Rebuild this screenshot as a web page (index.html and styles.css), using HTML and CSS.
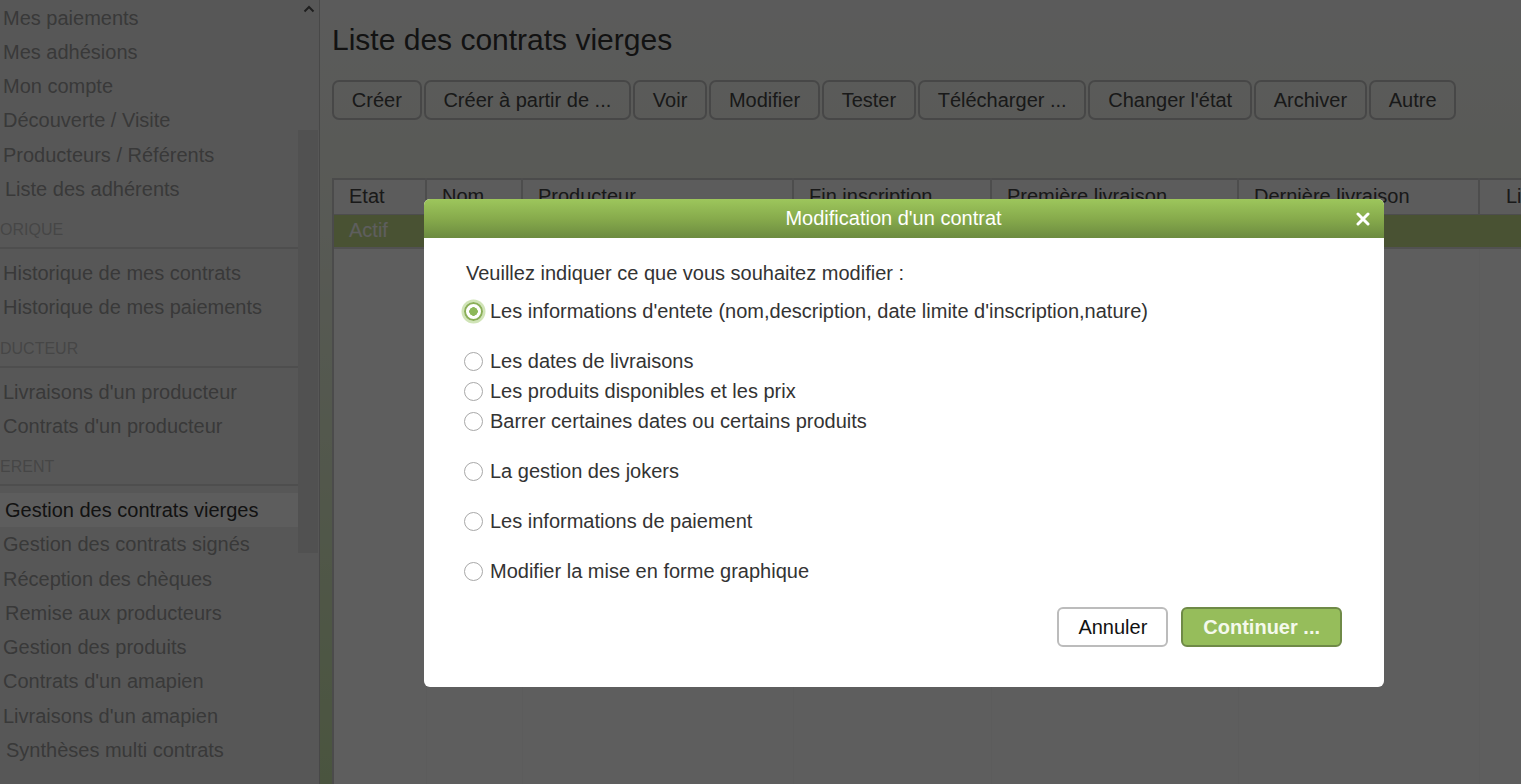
FILE: index.html
```html
<!DOCTYPE html>
<html lang="fr">
<head>
<meta charset="utf-8">
<title>Liste des contrats vierges</title>
<link rel="stylesheet" href="styles.css">
</head>
<body>
<div class="page">
  <aside class="sidebar">
    <div class="side-content">
      <ul class="menu first">
        <li>Mes paiements</li>
        <li>Mes adhésions</li>
        <li>Mon compte</li>
        <li>Découverte / Visite</li>
        <li>Producteurs / Référents</li>
        <li class="shift">Liste des adhérents</li>
      </ul>
      <div class="sect">ORIQUE</div>
      <ul class="menu">
        <li>Historique de mes contrats</li>
        <li>Historique de mes paiements</li>
      </ul>
      <div class="sect">DUCTEUR</div>
      <ul class="menu">
        <li>Livraisons d'un producteur</li>
        <li>Contrats d'un producteur</li>
      </ul>
      <div class="sect">ERENT</div>
      <ul class="menu">
        <li class="active shift">Gestion des contrats vierges</li>
        <li>Gestion des contrats signés</li>
        <li>Réception des chèques</li>
        <li class="shift">Remise aux producteurs</li>
        <li>Gestion des produits</li>
        <li>Contrats d'un amapien</li>
        <li>Livraisons d'un amapien</li>
        <li class="shift2">Synthèses multi contrats</li>
      </ul>
    </div>
    <div class="scrollbar">
      <div class="sb-arrow">
        <svg width="12" height="8" viewBox="0 0 12 8"><path d="M1.5 6.5 L6 2 L10.5 6.5" fill="none" stroke="#555" stroke-width="2"/></svg>
      </div>
      <div class="sb-thumb"></div>
    </div>
  </aside>

  <main class="main">
    <h1 class="title">Liste des contrats vierges</h1>
    <div class="toolbar">
      <button class="tbtn">Créer</button>
      <button class="tbtn">Créer à partir de ...</button>
      <button class="tbtn">Voir</button>
      <button class="tbtn">Modifier</button>
      <button class="tbtn">Tester</button>
      <button class="tbtn">Télécharger ...</button>
      <button class="tbtn">Changer l'état</button>
      <button class="tbtn">Archiver</button>
      <button class="tbtn">Autre</button>
    </div>
    <div class="grid-wrap">
      <table class="grid">
        <colgroup>
          <col class="c1"><col class="c2"><col class="c3"><col class="c4"><col class="c5"><col class="c6"><col class="c7">
        </colgroup>
        <thead>
          <tr>
            <th>Etat</th><th>Nom</th><th>Producteur</th><th>Fin inscription</th><th>Première livraison</th><th>Dernière livraison</th><th class="last">Livraisons</th>
          </tr>
        </thead>
        <tbody>
          <tr class="sel">
            <td>Actif</td><td></td><td></td><td></td><td></td><td></td><td></td>
          </tr>
          <tr class="filler">
            <td></td><td></td><td></td><td></td><td></td><td></td><td></td>
          </tr>
        </tbody>
      </table>
    </div>
  </main>
</div>

<div class="overlay"></div>

<div class="dialog" role="dialog">
  <div class="dlg-head">
    <span></span>
    <span class="dlg-title">Modification d'un contrat</span>
    <span class="dlg-close">
      <svg width="14" height="14" viewBox="0 0 14 14"><path d="M2 2 L12 12 M12 2 L2 12" stroke="#fff" stroke-width="3" stroke-linecap="round"/></svg>
    </span>
  </div>
  <div class="dlg-body">
    <div class="intro">Veuillez indiquer ce que vous souhaitez modifier :</div>
    <div class="opt"><span class="radio checked"></span>Les informations d'entete (nom,description, date limite d'inscription,nature)</div>
    <div class="spacer"></div>
    <div class="opt"><span class="radio"></span>Les dates de livraisons</div>
    <div class="opt"><span class="radio"></span>Les produits disponibles et les prix</div>
    <div class="opt"><span class="radio"></span>Barrer certaines dates ou certains produits</div>
    <div class="spacer"></div>
    <div class="opt"><span class="radio"></span>La gestion des jokers</div>
    <div class="spacer"></div>
    <div class="opt"><span class="radio"></span>Les informations de paiement</div>
    <div class="spacer"></div>
    <div class="opt"><span class="radio"></span>Modifier la mise en forme graphique</div>
    <div class="dlg-actions">
      <button class="btn-cancel">Annuler</button>
      <button class="btn-ok">Continuer ...</button>
    </div>
  </div>
</div>
</body>
</html>
```

FILE: styles.css
```css
* { box-sizing: border-box; }
html, body { margin: 0; padding: 0; height: 100%; }
body {
  font-family: "Liberation Sans", Arial, sans-serif;
  color: #333;
  overflow: hidden;
}
.page {
  display: flex;
  height: 100vh;
}

/* Sidebar */
.sidebar {
  width: 320px;
  flex: 0 0 320px;
  display: flex;
  background: #ededed;
  border-right: 1px solid #c4c4c4;
  overflow: hidden;
}
.side-content {
  width: 298px;
  flex: 0 0 298px;
  padding-top: 0.6px;
}
.menu {
  list-style: none;
  margin: 0;
  padding: 0;
}
.menu li {
  font-size: 20px;
  line-height: 34.25px;
  height: 34.25px;
  padding-left: 3px;
  color: #9a9a9a;
  white-space: nowrap;
}
.menu li.shift { padding-left: 5px; }
.menu li.shift2 { padding-left: 6px; }
.menu li.active {
  background: #fbfbfb;
  color: #333;
}
.sect {
  font-size: 16px;
  line-height: 18px;
  padding: 15px 0 8px 0;
  color: #bdbdbd;
  border-bottom: 2px solid #d4d4d4;
  margin-bottom: 7px;
  white-space: nowrap;
}
.scrollbar {
  width: 21px;
  flex: 0 0 21px;
  display: flex;
  flex-direction: column;
  align-items: center;
}
.sb-arrow {
  height: 17px;
  width: 21px;
  display: flex;
  justify-content: center;
  align-items: center;
}
.sb-thumb {
  margin-top: 113px;
  width: 20px;
  height: 423px;
  align-self: flex-start;
  background: #dcdcdc;
}

/* Main */
.main {
  flex: 1;
  min-width: 0;
  display: flex;
  flex-direction: column;
  padding-left: 12px;
  background: linear-gradient(to bottom, #f7f7f7 0%, #eef3e6 30%, #c9e5ab 100%);
}
.title {
  font-size: 30px;
  font-weight: normal;
  line-height: 34px;
  margin: 23px 0 23px 0;
  color: #333;
  white-space: nowrap;
}
.toolbar {
  display: flex;
  gap: 2px;
  height: 40px;
}
.tbtn {
  font-family: inherit;
  font-size: 20px;
  color: #444;
  height: 40px;
  padding: 0 17.8px;
  border: 2px solid #c2c2c2;
  border-radius: 7px;
  background: transparent;
  white-space: nowrap;
}
.grid-wrap {
  margin-top: 58px;
  flex: 1;
  overflow: hidden;
  background: #fff;
  border-left: 2px solid #cbcbcb;
}
.grid {
  border-collapse: collapse;
  table-layout: fixed;
  width: 1345px;
}
.c1 { width: 92px; }
.c2 { width: 96px; }
.c3 { width: 271px; }
.c4 { width: 198px; }
.c5 { width: 247px; }
.c6 { width: 241px; }
.c7 { width: 200px; }
.grid th {
  font-size: 20px;
  font-weight: normal;
  color: #444;
  text-align: left;
  height: 35px;
  padding: 0 0 0 15px;
  background: #f8f8f8;
  border-top: 2px solid #cbcbcb;
  border-right: 2px solid #d2d2d2;
  border-bottom: 1px solid #d2d2d2;
  white-space: nowrap;
  overflow: hidden;
}
.grid th.last { padding-left: 26px; }
.grid tr.sel td {
  height: 34px;
  background: #c6de8c;
  color: #fff;
  font-size: 20px;
  padding: 0 0 0 15px;
  border-bottom: 2px solid #dcdcdc;
}
.grid tr.filler td {
  height: 600px;
  border-right: 1px solid #fafafa;
}

/* Overlay & dialog */
.overlay {
  position: fixed;
  inset: 0;
  background: rgba(0, 0, 0, 0.63);
}
.dialog {
  position: fixed;
  left: 424px;
  top: 199px;
  width: 960px;
  background: #fff;
  border-radius: 6px;
  overflow: hidden;
}
.dlg-head {
  height: 39px;
  display: grid;
  grid-template-columns: 1fr auto 1fr;
  align-items: center;
  background: linear-gradient(to bottom, #9dc65c 0%, #87ab4c 50%, #6c8b40 100%);
}
.dlg-title {
  color: #fff;
  font-size: 20px;
  line-height: 39px;
  padding-right: 21px;
}
.dlg-close {
  justify-self: end;
  margin-right: 14px;
  display: flex;
  align-items: center;
}
.dlg-body {
  padding: 20px 42px 40px 40px;
  color: #333;
  font-size: 20px;
}
.intro {
  line-height: 30px;
  padding-left: 2px;
  margin-bottom: 8px;
}
.opt {
  display: flex;
  align-items: center;
  height: 30px;
  line-height: 30px;
  white-space: nowrap;
}
.spacer { height: 20px; }
.radio {
  width: 19px;
  height: 19px;
  border: 1.5px solid #a8a8a8;
  border-radius: 50%;
  background: #fff;
  margin-right: 7px;
  flex: 0 0 19px;
}
.radio.checked {
  border: 2px solid #8aaf58;
  background: radial-gradient(circle, #8db85a 0 4px, #fff 4.5px);
  box-shadow: 0 0 0 2.5px rgba(150, 195, 95, 0.45);
}
.dlg-actions {
  display: flex;
  justify-content: flex-end;
  gap: 13px;
  margin-top: 21px;
}
.btn-cancel, .btn-ok {
  font-family: inherit;
  font-size: 20px;
  height: 40px;
  border-radius: 6px;
  white-space: nowrap;
}
.btn-cancel {
  padding: 0 19px;
  background: #fff;
  color: #111;
  border: 2px solid #bcbcbc;
}
.btn-ok {
  padding: 0 20px;
  background: #96bd5b;
  color: #f4f9ec;
  font-weight: bold;
  border: 2px solid #6f8a47;
}
```
